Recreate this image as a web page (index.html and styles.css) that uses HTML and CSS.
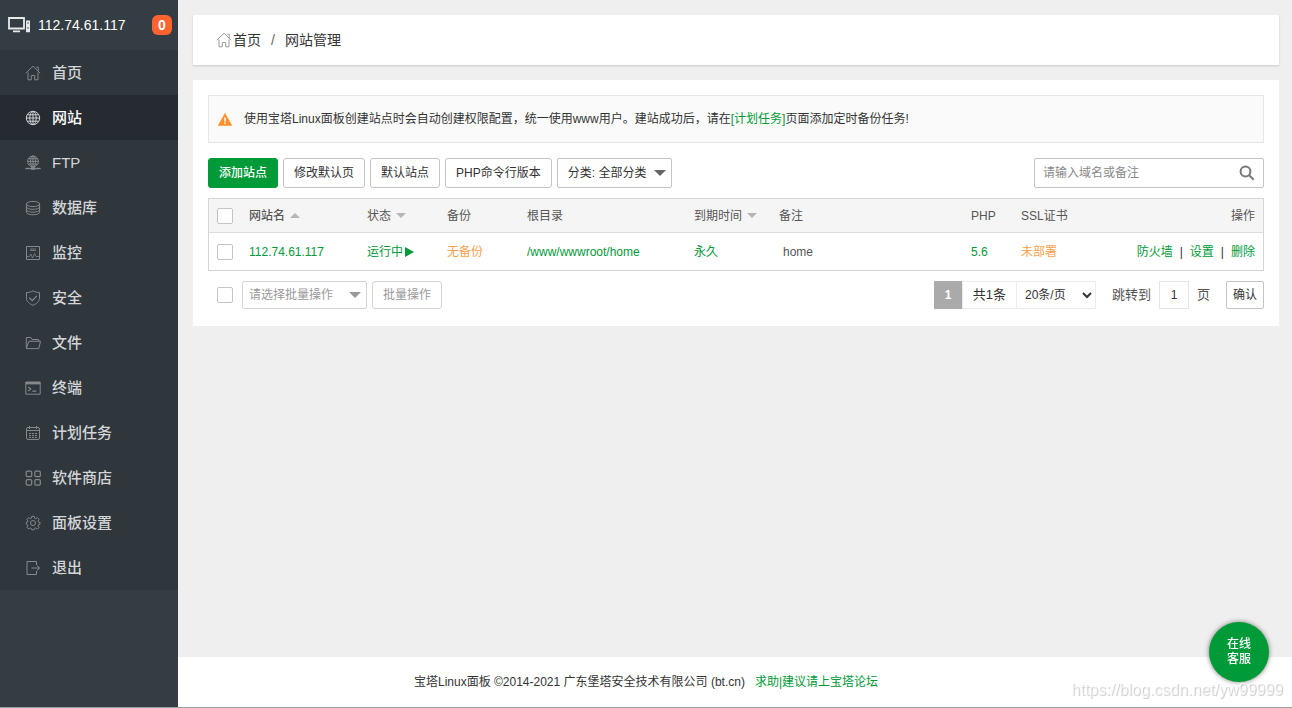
FILE: index.html
```html
<!DOCTYPE html>
<html lang="zh-CN">
<head>
<meta charset="utf-8">
<title>网站管理</title>
<link rel="stylesheet" href="styles.css">
</head>
<body>
<svg class="sprite" aria-hidden="true">
  <symbol id="home" viewBox="0 0 16 16"><path d="M.8 8.2 8 1.2l7.2 7M3 7.5v7.3h3.3v-4.3h3.4v4.3H13V7.5M11.3 2.2h2v3.6"/></symbol>
  <symbol id="globe" viewBox="0 0 16 16"><circle cx="8" cy="8" r="6.7"/><ellipse cx="8" cy="8" rx="3.2" ry="6.7"/><path d="M8 1.3v13.4M1.3 8h13.4M2.3 4.8h11.4M2.3 11.2h11.4"/></symbol>
</svg>
<div class="app">
  <aside class="sidebar">
    <header class="server">
      <svg class="server-icon" viewBox="0 0 24 18" aria-hidden="true"><path d="M2 2h15v10.500H2z" fill="none" stroke="#e8eaea" stroke-width="1.800"/><path d="M6 14.600h7v1.600H6zM19 4.500h4v11.700h-4z" fill="#e8eaea"/><path d="M20.500 7h1M20.500 12h1" stroke="#353d44" stroke-width="1.400"/></svg>
      <span class="server-ip">112.74.61.117</span>
      <span class="badge">0</span>
    </header>
    <nav class="menu">
      <a href="#"><svg class="icon"><use href="#home"/></svg>首页</a>
      <a href="#" class="active"><svg class="icon"><use href="#globe"/></svg>网站</a>
      <a href="#"><svg class="icon" viewBox="0 0 16 16"><circle cx="8" cy="6.4" r="5.4"/><ellipse cx="8" cy="6.4" rx="2.5" ry="5.4"/><path d="M8 1v13M2.6 6.4h10.8M3.4 3.8h9.2M3.4 9h9.2"/><path d="M.3 13.500h15.400" stroke-width="1.400"/><path d="M6 13.500h4" stroke-width="2.600"/></svg>FTP</a>
      <a href="#"><svg class="icon" viewBox="0 0 16 16"><ellipse cx="8" cy="4" rx="6.6" ry="2.6"/><path d="M1.4 4v8.2c0 3.4 13.2 3.4 13.2 0V4M1.4 6.8c0 3.4 13.2 3.4 13.2 0M1.4 9.6c0 3.4 13.2 3.4 13.2 0"/></svg>数据库</a>
      <a href="#"><svg class="icon" viewBox="0 0 16 16"><path d="M1.500 1.500h13v13h-13z"/><path d="M5 4h6M5 5.500h6M1.500 11.500h3l1.300-2.500 1.700 4 2-4.500 1.500 3h3.500" stroke-width=".8"/></svg>监控</a>
      <a href="#"><svg class="icon" viewBox="0 0 16 16"><path d="M8 .8c2 1.3 4.2 1.7 6.5 1.7v5.7c0 3.4-3 5.6-6.5 7.1-3.500-1.500-6.500-3.700-6.500-7.100V2.500C3.800 2.500 6 2.100 8 .8z"/><path d="m4.300 7.700 3 2.900 4.500-4.700" stroke-width="1.300"/></svg>安全</a>
      <a href="#"><svg class="icon" viewBox="0 0 16 16"><path d="M1.300 13V2.500h4.500l1.300 2h6.600v1.800M1.300 13.600 3.800 6.300h11.700l-1.700 7.300H1.300z"/></svg>文件</a>
      <a href="#"><svg class="icon" viewBox="0 0 16 16"><path d="M.8 2h14.400v12.200H.8z"/><path d="M.8 3.200h14.400" stroke-width="2.400"/><path d="m3.300 7 2.400 2-2.400 2M7.300 11.200h4" stroke-width="1.200"/></svg>终端</a>
      <a href="#"><svg class="icon" viewBox="0 0 16 16"><rect x="1.500" y="2.500" width="13" height="12" rx="1.500"/><path d="M4.500 1v3M11.500 1v3M1.500 5.500h13"/><path d="M4 8.500h8M4 10.500h8M4 12.500h8" stroke-dasharray="2 1"/></svg>计划任务</a>
      <a href="#"><svg class="icon" viewBox="0 0 16 16"><g stroke-width="1.200"><rect x="1.200" y="1.200" width="5.500" height="5.500" rx="1.200"/><rect x="9.800" y="1.200" width="5.500" height="5.500" rx="1.200"/><rect x="1.200" y="9.600" width="5.500" height="5.500" rx="1.200"/><rect x="9.800" y="9.600" width="5.500" height="5.500" rx="1.200"/></g></svg>软件商店</a>
      <a href="#"><svg class="icon" viewBox="0 0 16 16"><circle cx="8" cy="8" r="2.500"/><path d="M6.800 1.300h2.400l.4 1.900 1.100.5 1.700-1.100 1.700 1.700-1.100 1.700.5 1.100 1.500.3v1.800l-1.500.5-.5 1.100 1.100 1.500-1.700 1.700-1.700-1.100-1.100.5-.4 1.400H6.800l-.4-1.400-1.100-.5-1.700 1.100-1.700-1.700L3 10.800l-.5-1.100L1.200 9.200V7.400l1.300-.3L3 6 1.900 4.300l1.700-1.700 1.700 1.100 1.100-.5z"/></svg>面板设置</a>
      <a href="#"><svg class="icon" viewBox="0 0 16 16"><path d="M11.500 5V1.500H2v13h9.500V11M6.500 8h8.200M12 5.500 14.700 8 12 10.500"/></svg>退出</a>
    </nav>
  </aside>

  <div class="page">
    <main class="content">
      <nav class="crumbs"><svg class="icon"><use href="#home"/></svg><a href="#">首页</a><span class="slash">/</span><a href="#">网站管理</a></nav>

      <section class="panel">
        <div class="notice">
          <svg class="warn" viewBox="0 0 14 13" aria-hidden="true"><path d="M7 .4 13.800 12.600H.2z" fill="#ff8f2b" stroke="#ff8f2b" stroke-width=".6" stroke-linejoin="round"/><path d="M7 4.600v3.800M7 9.600v1.500" stroke="#fff" stroke-width="1.600"/></svg>
          <p>使用宝塔Linux面板创建站点时会自动创建权限配置，统一使用www用户。建站成功后，请在<a href="#">[计划任务]</a>页面添加定时备份任务!</p>
        </div>

        <div class="toolbar">
          <button type="button" class="btn primary">添加站点</button>
          <button type="button" class="btn">修改默认页</button>
          <button type="button" class="btn">默认站点</button>
          <button type="button" class="btn">PHP命令行版本</button>
          <label class="pick category"><select aria-label="分类"><option>分类: 全部分类</option></select></label>
          <form class="search">
            <input type="text" placeholder="请输入域名或备注" aria-label="搜索">
            <button type="button" aria-label="搜索"><svg viewBox="0 0 16 16"><circle cx="6.500" cy="6.500" r="4.900"/><path d="m10.200 10.200 4.500 4.500"/></svg></button>
          </form>
        </div>

        <table class="sites">
          <colgroup><col class="c-check"><col class="c-name"><col class="c-short"><col class="c-short"><col class="c-root"><col class="c-date"><col class="c-note"><col class="c-php"><col class="c-ssl"><col class="c-ops"></colgroup>
          <thead>
            <tr>
              <th><input type="checkbox" aria-label="全选"></th>
              <th class="sorted">网站名<i class="sort up"></i></th>
              <th>状态<i class="sort"></i></th>
              <th>备份</th>
              <th>根目录</th>
              <th>到期时间<i class="sort"></i></th>
              <th>备注</th>
              <th>PHP</th>
              <th>SSL证书</th>
              <th class="ops">操作</th>
            </tr>
          </thead>
          <tbody>
            <tr>
              <td><input type="checkbox" aria-label="选择 112.74.61.117"></td>
              <td><a href="#">112.74.61.117</a></td>
              <td><a href="#" class="run">运行中<i class="play"></i></a></td>
              <td><a href="#" class="orange">无备份</a></td>
              <td><a href="#">/www/wwwroot/home</a></td>
              <td><a href="#">永久</a></td>
              <td><span class="note">home</span></td>
              <td><a href="#">5.6</a></td>
              <td><a href="#" class="orange">未部署</a></td>
              <td class="ops"><a href="#">防火墙</a><span class="bar">|</span><a href="#">设置</a><span class="bar">|</span><a href="#">删除</a></td>
            </tr>
          </tbody>
        </table>

        <div class="bottom">
          <input type="checkbox" aria-label="全选">
          <label class="pick batch"><select aria-label="批量操作"><option>请选择批量操作</option></select></label>
          <button type="button" class="btn muted">批量操作</button>
          <div class="pager">
            <span class="current">1</span>
            <span class="total">共1条</span>
            <select class="size" aria-label="每页条数"><option>20条/页</option></select>
            <label for="jump">跳转到</label>
            <input id="jump" type="text" value="1">
            <span class="unit">页</span>
            <button type="button" class="confirm">确认</button>
          </div>
        </div>
      </section>
    </main>
    <footer class="footer">宝塔Linux面板 ©2014-2021 广东堡塔安全技术有限公司 (bt.cn)<a href="#">求助|建议请上宝塔论坛</a></footer>
  </div>
</div>
<button type="button" class="service">在线<br>客服</button>
<span class="watermark">https://blog.csdn.net/yw99999</span>
</body>
</html>
```
FILE: styles.css
```css
* { box-sizing: border-box; }
body {
  margin: 0;
  font: 12px/18px "Liberation Sans", "Noto Sans CJK SC", sans-serif;
  color: #333;
  background: #efefef;
}
a { color: #009a38; text-decoration: none; }
p { margin: 0; }
button, input, select { font: inherit; color: inherit; margin: 0; }
.sprite { position: absolute; width: 0; height: 0; }
.icon { width: 16px; height: 16px; flex: none; fill: none; stroke: currentColor; stroke-width: 1; }

.app { display: flex; min-height: 100vh; border-bottom: 1px solid #99a1a2; }

.sidebar { width: 178px; flex: none; background: #353d44; }
.server { display: flex; align-items: center; height: 50px; padding: 0 6px 0 7px; color: #fff; font-size: 14px; }
.server-icon { width: 24px; height: 18px; margin-right: 7px; }
.badge {
  margin-left: auto;
  width: 20px;
  line-height: 20px;
  border-radius: 6px;
  background: #ff632f;
  text-align: center;
  font-weight: bold;
}
.menu { background: #2f363c; }
.menu a { display: flex; align-items: center; gap: 11px; height: 45px; padding-left: 25px; font-size: 15px; font-weight: 500; color: #d3d5d7; }
.menu .icon { color: #85898b; }
.menu .active { background: #262a31; color: #fff; }
.menu .active .icon { color: #d0d2d4; }

.page { flex: 1; min-width: 0; display: flex; flex-direction: column; }
.content { flex: 1; padding: 15px 13px 15px 15px; }
.crumbs {
  display: flex;
  align-items: center;
  height: 50px;
  padding-left: 23px;
  margin-bottom: 15px;
  background: #fff;
  box-shadow: 0 1px 2px rgba(0, 0, 0, .15);
  font-size: 14px;
}
.crumbs .icon { color: #999; margin-right: 1px; }
.crumbs a { color: #333; }
.slash { margin: 0 10px; color: #666; }

.panel { padding: 15px 15px 17px; background: #fff; }
.notice { display: flex; align-items: center; gap: 12px; height: 48px; padding-left: 9px; margin-bottom: 15px; border: 1px solid #e6e6e6; background: #fafafa; }
.warn { width: 14px; height: 13px; }

.toolbar { display: flex; gap: 5px; height: 30px; margin-bottom: 10px; }
.btn { padding: 0 10px; border: 1px solid #c4c4c4; border-radius: 3px; background: #fff; white-space: nowrap; }
.primary { border-color: #009a38; background: #009a38; color: #fff; font-weight: 500; }
.pick { position: relative; display: flex; }
.pick select { appearance: none; width: 100%; border: 1px solid #c4c4c4; border-radius: 2px; background: #fff; outline: 0; }
.pick::after {
  content: "";
  position: absolute;
  top: 50%;
  right: 6px;
  margin-top: -3px;
  border: 6px solid transparent;
  border-top-color: #666;
  border-bottom: 0;
}
.category { width: 115px; }
.category select { padding: 0 10px; }
.search { display: flex; width: 230px; margin-left: auto; border: 1px solid #c4c4c4; border-radius: 2px; }
.search input { flex: 1; min-width: 0; padding: 0 8px; border: 0; background: none; outline: 0; }
.search input::placeholder { color: #888; }
.search button { display: flex; align-items: center; padding: 0 8px; border: 0; background: none; }
.search svg { width: 16px; height: 16px; fill: none; stroke: #777; stroke-width: 2; }

.sites { width: 100%; table-layout: fixed; border: 1px solid #d5d5d5; border-spacing: 0; color: #555; }
.sites th, .sites td { height: 37px; padding: 0 8px; text-align: left; vertical-align: middle; white-space: nowrap; }
.sites th { height: 34px; border-bottom: 1px solid #ddd; background: #f5f5f5; font-weight: 400; }
.sites .sorted { font-weight: 500; }
.sites .ops { text-align: right; }
.sites .orange { color: #f8a14c; }
.c-check { width: 32px; }
.c-name { width: 118px; }
.c-short { width: 80px; }
.c-root { width: 167px; }
.c-date { width: 85px; }
.c-php { width: 50px; }
.c-ssl { width: 100px; }
.c-ops { width: 150px; }
.sort { display: inline-block; margin-left: 5px; vertical-align: 2px; border: 5px solid transparent; border-top-color: #b5b5b5; border-bottom: 0; }
.sort.up { border-top: 0; border-bottom: 5px solid #b5b5b5; }
.play { display: inline-block; margin-left: 2px; vertical-align: -1px; border: 5px solid transparent; border-left: 9px solid #009a38; border-right: 0; }
.note { padding-left: 4px; }
.bar { margin: 0 7px; color: #333; }

input[type="checkbox"] { appearance: none; display: block; flex: none; width: 16px; height: 16px; border: 1px solid #c4c4c4; border-radius: 2px; background: #fff; }

.bottom { display: flex; gap: 5px; height: 28px; margin-top: 10px; padding-left: 9px; color: #999; }
.bottom > input { align-self: center; margin-right: 4px; }
.batch { width: 125px; }
.batch select { padding: 0 6px; border-color: #d5d5d5; opacity: 1; }
.batch::after { border-top-color: #999; }
.muted { border-color: #d5d5d5; }
.pager { display: flex; align-items: center; margin-left: auto; color: #333; }
.pager > * { height: 28px; line-height: 28px; }
.pager .current { width: 28px; background: #aaa; color: #fff; font-weight: bold; text-align: center; }
.pager .total { width: 55px; border: 1px solid #ececec; line-height: 26px; text-align: center; font-size: 13px; }
.pager .size { width: 80px; padding: 0 0 0 4px; margin-left: -1px; border: 1px solid #ececec; background: #fff; line-height: 18px; }
.pager label { margin: 0 8px 0 16px; font-size: 13px; color: #555; }
.pager input { width: 30px; padding: 0; border: 1px solid #e5e5e5; text-align: center; }
.pager .unit { margin: 0 16px 0 8px; font-size: 13px; color: #555; }
.pager .confirm { width: 38px; padding: 0; border: 1px solid #c4c4c4; border-radius: 2px; background: #fff; line-height: 18px; }

.footer { display: flex; align-items: center; justify-content: center; gap: 10px; height: 50px; padding-right: 178px; background: #fff; }

.service {
  position: fixed;
  right: 23px;
  bottom: 26px;
  width: 60px;
  height: 60px;
  padding: 0;
  border: 0;
  border-radius: 50%;
  background: #009a38;
  color: #fff;
  font-weight: 500;
  line-height: 15px;
  box-shadow: 0 0 5px rgba(0, 0, 0, .5);
}
.watermark { position: fixed; right: 9px; bottom: 9px; color: rgba(255, 255, 255, .6); font-size: 16px; text-shadow: 1px 1px 1px rgba(0, 0, 0, .22); }
```
